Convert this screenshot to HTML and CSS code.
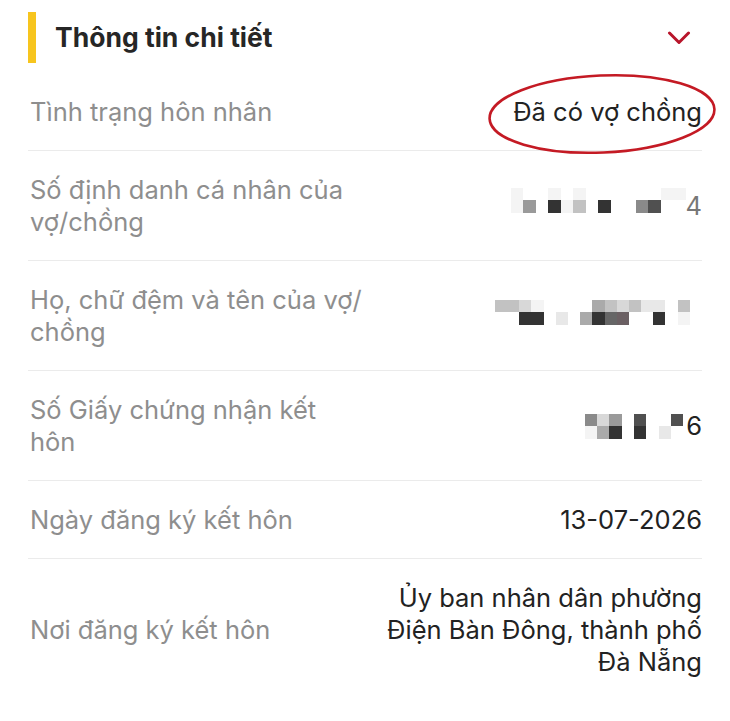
FILE: index.html
```html
<!DOCTYPE html>
<html lang="vi">
<head>
<meta charset="utf-8">
<title>Thông tin chi tiết</title>
<link rel="stylesheet" href="styles.css">
</head>
<body>
<main class="panel">
  <header class="head">
    <span class="bar"></span>
    <h1 class="title">Thông tin chi tiết</h1>
    <svg class="chev" width="24" height="14" viewBox="0 0 24 14"><polyline points="2.5,2 12,11.5 21.5,2" fill="none" stroke="#b8152b" stroke-width="3" stroke-linecap="round" stroke-linejoin="round"/></svg>
  </header>

  <div class="row row-circled">
    <div class="label">Tình trạng hôn nhân</div>
    <div class="value">Đã có vợ chồng</div>
    <svg class="ring" width="232" height="82" viewBox="0 0 232 82"><ellipse cx="116" cy="41" rx="112.5" ry="38.5" transform="rotate(-2.5 116 41)" fill="none" stroke="#c41a24" stroke-width="2.6"/></svg>
  </div>

  <div class="row">
    <div class="label">Số định danh cá nhân của vợ/chồng</div>
    <div class="value">
      <span class="mosaic m14 up6">
        <i class="g1"></i><i></i><i></i><i class="g1"></i><i></i><i class="g1"></i><i></i><i></i><i></i><i></i><i></i><i></i><i class="g1"></i><i class="g1"></i>
        <i class="g1"></i><i class="g6"></i><i></i><i class="g10"></i><i class="g1"></i><i class="g4"></i><i></i><i class="g10"></i><i></i><i></i><i class="g7"></i><i class="g9"></i><i></i><i></i>
      </span><span class="digit light">4</span>
    </div>
  </div>

  <div class="row">
    <div class="label">Họ, chữ đệm và tên của vợ/ chồng</div>
    <div class="value">
      <span class="mosaic m17 up4">
        <i class="g4"></i><i class="g4"></i><i class="g3"></i><i class="g1"></i><i></i><i></i><i></i><i></i><i class="g5"></i><i class="g4"></i><i class="g3"></i><i class="g4"></i><i class="g2"></i><i class="g2"></i><i></i><i class="g4"></i><i></i>
        <i></i><i></i><i class="g10"></i><i class="g10"></i><i></i><i class="g2"></i><i></i><i class="g5"></i><i class="g10"></i><i class="g8"></i><i class="gp"></i><i></i><i></i><i class="g10"></i><i></i><i class="g1"></i><i></i>
      </span>
    </div>
  </div>

  <div class="row">
    <div class="label">Số Giấy chứng nhận kết hôn</div>
    <div class="value">
      <span class="mosaic m8">
        <i class="g7"></i><i class="g3"></i><i class="g6"></i><i></i><i class="g9"></i><i></i><i></i><i class="g9"></i>
        <i class="g1"></i><i class="g5"></i><i class="g10"></i><i></i><i class="g10"></i><i></i><i class="g2"></i><i></i>
      </span><span class="digit">6</span>
    </div>
  </div>

  <div class="row">
    <div class="label">Ngày đăng ký kết hôn</div>
    <div class="value">13-07-2026</div>
  </div>

  <div class="row last">
    <div class="label">Nơi đăng ký kết hôn</div>
    <div class="value wide">Ủy ban nhân dân phường Điện Bàn Đông, thành phố Đà Nẵng</div>
  </div>
</main>
</body>
</html>
```

FILE: styles.css
```css
html, body {
  margin: 0;
  padding: 0;
  background: #ffffff;
}

body {
  font-family: Inter, "Noto Sans", "Liberation Sans", sans-serif;
  -webkit-font-smoothing: antialiased;
}

.panel {
  padding: 0 28px;
}

.head {
  display: flex;
  align-items: center;
  height: 73px;
  box-sizing: border-box;
}

.bar {
  width: 8px;
  height: 51px;
  background: #f7c51e;
  margin-top: 2px;
}

.title {
  margin: 0 0 0 19px;
  font-size: 26.5px;
  font-weight: 700;
  color: #262626;
  letter-spacing: 0;
}

.chev {
  margin-left: auto;
  margin-right: 11px;
  margin-top: 2px;
}

.row {
  display: flex;
  align-items: center;
  justify-content: space-between;
  padding: 23px 0 22px;
  border-bottom: 1px solid #ebebeb;
  font-size: 25.5px;
  line-height: 32px;
  letter-spacing: 0;
}

.row.last {
  border-bottom: none;
}

.row-circled {
  position: relative;
}

.ring {
  position: absolute;
  right: -16px;
  top: 0px;
}

.label {
  color: #8e8e8e;
  width: 338px;
  flex: none;
  padding-left: 2px;
}

.value {
  color: #222222;
  text-align: right;
  display: flex;
  align-items: center;
  justify-content: flex-end;
}

.value.wide {
  display: block;
  max-width: 330px;
}

.mosaic {
  display: inline-grid;
  grid-auto-rows: 12.5px;
}

.m14 { grid-template-columns: repeat(14, 12.5px); }
.m17 { grid-template-columns: repeat(17, 12.2px); }
.m8 { grid-template-columns: repeat(8, 12.3px); margin-right: 3px; }

.up6 { margin-bottom: 12px; }
.up4 { margin-bottom: 8px; }

.mosaic i { display: block; background: #ffffff; }
.mosaic i.g1 { background: #f4f4f4; }
.mosaic i.g2 { background: #e8e8e8; }
.mosaic i.g3 { background: #d8d8d8; }
.mosaic i.g4 { background: #c2c2c2; }
.mosaic i.g5 { background: #aaaaaa; }
.mosaic i.g6 { background: #9a9a9a; }
.mosaic i.g7 { background: #8a8a8a; }
.mosaic i.g8 { background: #666666; }
.mosaic i.g9 { background: #505050; }
.mosaic i.g10 { background: #333333; }
.mosaic i.gp { background: #6b6063; }

.digit {
  color: #222222;
}

.digit.light {
  color: #777777;
}
```
